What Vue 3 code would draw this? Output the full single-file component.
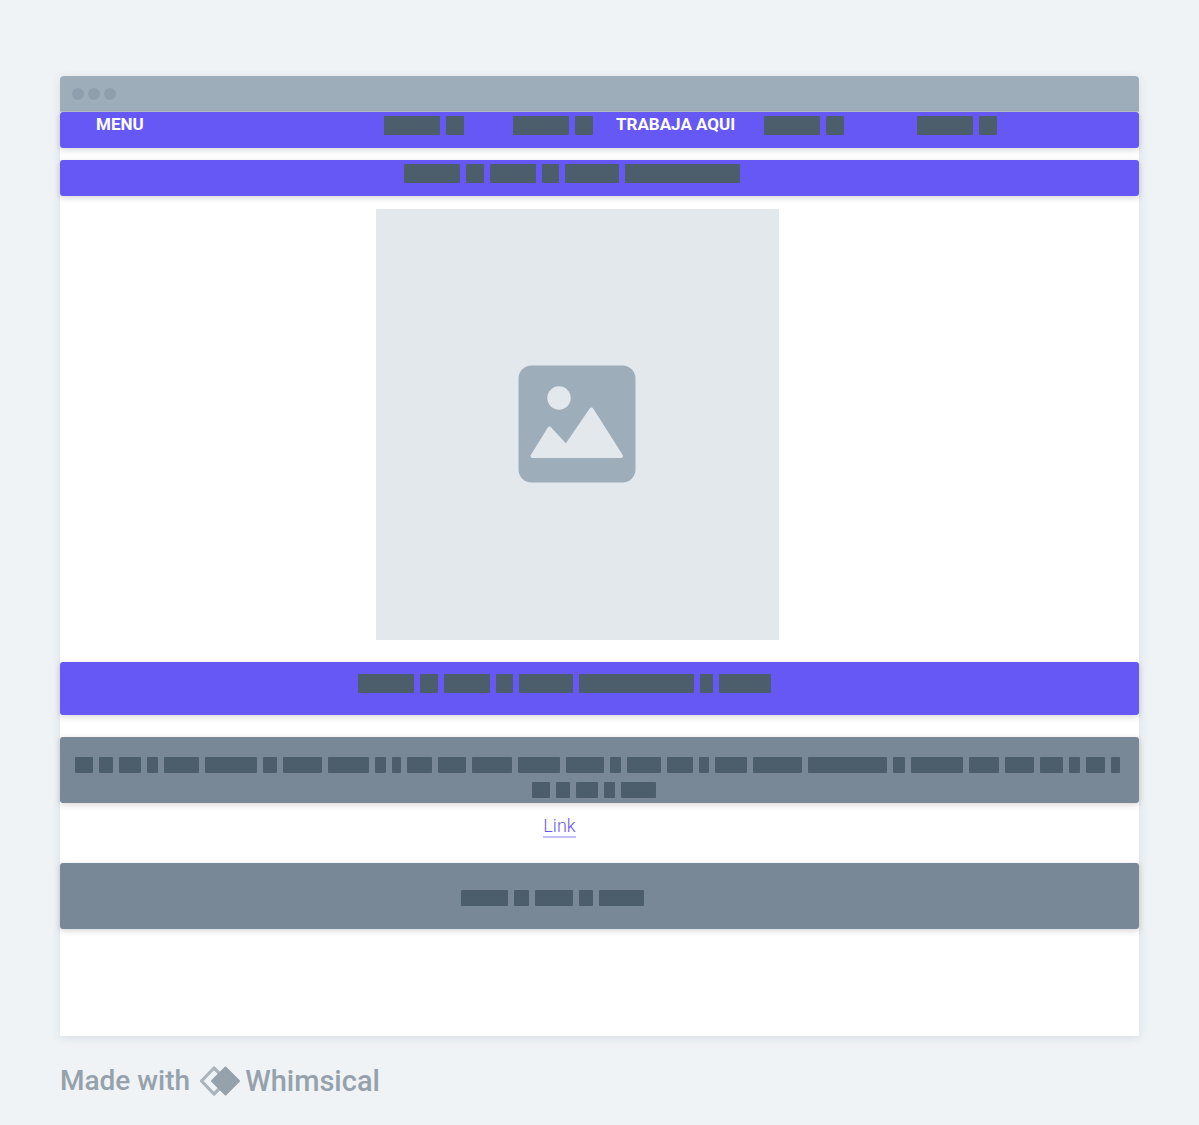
<script setup>
const navLabel = [56, 18]
const title = [56, 18, 46, 17, 54, 115]
const caption = [56, 18, 46, 17, 54, 115, 13, 52]
const paragraph = [
  18, 14, 22, 11, 35, 52, 14, 39, 41, 11, 9, 25, 28, 40, 42, 38,
  11, 34, 26, 10, 32, 49, 79, 12, 52, 30, 29, 23, 11, 19, 9,
]
const paragraphEnd = [18, 14, 22, 11, 35]
const footer = [47, 15, 38, 14, 45]
</script>

<template>
  <div class="page">
    <main class="window">
      <header class="chrome">
        <span class="dot"></span>
        <span class="dot"></span>
        <span class="dot"></span>
      </header>

      <nav class="bar nav">
        <a href="#" class="nav-link">MENU</a>
        <span class="words"><i v-for="(w, i) in navLabel" :key="i" :style="{ width: w + 'px' }"></i></span>
        <span class="words"><i v-for="(w, i) in navLabel" :key="i" :style="{ width: w + 'px' }"></i></span>
        <a href="#" class="nav-link">TRABAJA AQUI</a>
        <span class="words"><i v-for="(w, i) in navLabel" :key="i" :style="{ width: w + 'px' }"></i></span>
        <span class="words"><i v-for="(w, i) in navLabel" :key="i" :style="{ width: w + 'px' }"></i></span>
      </nav>

      <div class="bar title">
        <span class="words"><i v-for="(w, i) in title" :key="i" :style="{ width: w + 'px' }"></i></span>
      </div>

      <div class="picture-row">
        <div class="picture">
          <svg width="118" height="118" viewBox="0 0 118 118" aria-hidden="true">
            <rect x="0.5" y="0.5" width="117" height="117" rx="13" fill="#9eadba" />
            <circle cx="41" cy="33" r="11.7" fill="#e2e8ec" />
            <path d="M14.5 91 L31.5 63.5 L48.2 81.5 L73.5 44.5 L103 91 Z" fill="#e2e8ec" stroke="#e2e8ec" stroke-width="4" stroke-linejoin="round" />
          </svg>
        </div>
      </div>

      <div class="bar caption">
        <span class="words"><i v-for="(w, i) in caption" :key="i" :style="{ width: w + 'px' }"></i></span>
      </div>

      <div class="bar grey paragraph">
        <span class="words small"><i v-for="(w, i) in paragraph" :key="i" :style="{ width: w + 'px' }"></i></span>
        <span class="words small last"><i v-for="(w, i) in paragraphEnd" :key="i" :style="{ width: w + 'px' }"></i></span>
      </div>

      <div class="link-row"><a href="#" class="link">Link</a></div>

      <div class="bar grey foot">
        <span class="words small"><i v-for="(w, i) in footer" :key="i" :style="{ width: w + 'px' }"></i></span>
      </div>
    </main>

    <footer class="credit">
      <span>Made with</span>
      <svg width="42" height="32" viewBox="0 0 42 32" aria-hidden="true">
        <path d="M15 3 L28 16 L15 29 L2.5 16 Z" fill="none" stroke="#a9b4bd" stroke-width="3.2" stroke-linejoin="round" />
        <path d="M26.5 2.500 L40 16 L26.5 29.5 L13 16 Z" fill="#95a1ab" stroke="#95a1ab" stroke-width="2" stroke-linejoin="round" />
      </svg>
      <span class="brand">Whimsical</span>
    </footer>
  </div>
</template>

<style>
body {
  margin: 0;
  background: #eff3f6;
}
</style>

<style scoped>
.page {
  box-sizing: border-box;
  min-height: 100vh;
  padding: 76px 60px 28px;
  font-family: Roboto, sans-serif;
}
.window {
  padding-bottom: 107px;
  border-radius: 4px 4px 0 0;
  background: #fff;
  box-shadow: 0 2px 10px rgba(60, 80, 100, 0.12);
}
.chrome {
  display: flex;
  align-items: center;
  gap: 4px;
  height: 35px;
  padding-left: 12px;
  border-bottom: 1px solid #b9c3cd;
  border-radius: 4px 4px 0 0;
  background: #9eadba;
}
.dot {
  width: 12px;
  height: 12px;
  border-radius: 50%;
  background: #8f9fae;
}
.bar {
  display: flex;
  box-sizing: border-box;
  border-radius: 3px;
  background: #6558f5;
  box-shadow: 0 2px 6px rgba(0, 0, 0, 0.16);
}
.grey {
  background: #788896;
}
.words {
  display: flex;
  gap: 6px;
}
.words i {
  height: 19px;
  border-radius: 1px;
  background: #4c5d6b;
}
.words.small i {
  height: 16px;
}
.nav {
  display: grid;
  grid-template-columns: 288fr 129fr 103fr 148fr 153fr 222fr;
  height: 36px;
  padding: 4px 0 0 36px;
}
.nav-link {
  color: #fff;
  font-size: 17px;
  font-weight: 700;
  line-height: 16px;
  text-decoration: none;
  white-space: nowrap;
}
.title {
  justify-content: center;
  height: 36px;
  margin-top: 12px;
  padding: 4px 55px 0 0;
}
.picture-row {
  display: flex;
  justify-content: center;
  padding: 13px 44px 22px 0;
}
.picture {
  display: flex;
  box-sizing: border-box;
  align-items: center;
  justify-content: center;
  width: 403px;
  height: 431px;
  padding: 0 1px 2px 0;
  background: #e2e8ec;
}
.caption {
  justify-content: center;
  padding: 12px 71px 22px 0;
}
.paragraph {
  flex-direction: column;
  align-items: center;
  gap: 9px;
  margin-top: 22px;
  padding: 20px 4px 5px 0;
}
.paragraph .last {
  padding-right: 8px;
}
.link-row {
  display: flex;
  justify-content: center;
  padding: 14px 80px 25px 0;
}
.link {
  padding-bottom: 2px;
  border-bottom: 2px solid #c4befb;
  color: #6558f5;
  font-size: 18px;
  font-weight: 300;
  line-height: 17px;
  text-decoration: none;
}
.foot {
  justify-content: center;
  padding: 27px 94px 23px 0;
}
.credit {
  display: flex;
  align-items: center;
  margin-top: 29px;
  color: #95a1ab;
  font-size: 28px;
  font-weight: 500;
  line-height: 32px;
}
.credit svg {
  margin: 0 4px 0 9px;
}
.brand {
  font-size: 29px;
}
</style>
